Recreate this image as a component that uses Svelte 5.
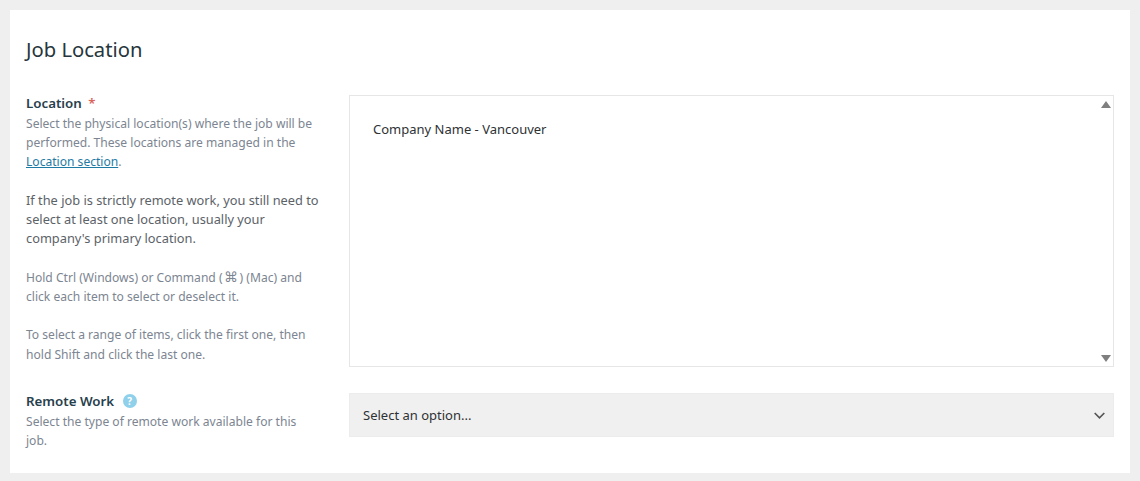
<script lang="ts">
  const locations = ['Company Name - Vancouver'];
</script>

<div class="page">
  <section class="card">
    <h2>Job Location</h2>

    <div class="field location">
      <div class="info">
        <div class="label">Location <span class="req">*</span></div>
        <p class="muted">
          Select the physical location(s) where the job will be performed. These locations are managed in the
          <a href="#location">Location section</a>.
        </p>
        <p class="dark">
          If the job is strictly remote work, you still need to select at least one location, usually your company's primary location.
        </p>
        <p class="muted">Hold Ctrl (Windows) or Command (<span class="cmd">⌘</span>) (Mac) and click each item to select or deselect it.</p>
        <p class="muted">To select a range of items, click the first one, then hold Shift and click the last one.</p>
      </div>
      <div class="listbox">
        <div class="options">
          {#each locations as loc}
            <div class="option">{loc}</div>
          {/each}
        </div>
        <div class="scrollbar">
          <span class="arrow up"></span>
          <span class="arrow down"></span>
        </div>
      </div>
    </div>

    <div class="field remote">
      <div class="info">
        <div class="label">
          Remote Work
          <span class="help">?</span>
        </div>
        <p class="muted">Select the type of remote work available for this job.</p>
      </div>
      <div class="select">
        <span>Select an option...</span>
        <svg viewBox="0 0 11 7" width="11" height="7" fill="none" stroke="#555" stroke-width="1.7" aria-hidden="true">
          <path d="M.7 1 5.5 5.8 10.3 1"></path>
        </svg>
      </div>
    </div>
  </section>
</div>

<style>
  :global(body) {
    margin: 0;
    background: #efefef;
    font-family: "Noto Sans", "Open Sans", sans-serif;
  }

  .page {
    padding: 10px;
    height: 481px;
    box-sizing: border-box;
  }

  .card {
    background: #fff;
    height: 463px;
    padding: 24px 16px 0;
    box-sizing: border-box;
  }

  h2 {
    margin: 0 0 29px;
    font-size: 20.2px;
    font-weight: 400;
    line-height: 30px;
    color: #27363c;
  }

  .field {
    display: grid;
    grid-template-columns: 323px 1fr;
  }

  .location {
    height: 274px;
    margin-bottom: 24px;
  }

  .label {
    font-size: 13.3px;
    font-weight: 600;
    line-height: 20px;
    margin-bottom: 1px;
    color: #27404c;
  }

  .req {
    color: #d9655a;
    margin-left: 3px;
  }

  p {
    margin: 0 0 19.25px;
    font-size: 12.08px;
    line-height: 19.2px;
    width: 295px;
  }

  p:last-child {
    margin-bottom: 0;
  }

  .muted {
    width: 290px;
    color: #7c8591;
  }

  .dark {
    font-size: 12.8px;
    color: #5c6268;
  }

  .cmd {
    font-family: "DejaVu Sans", sans-serif;
    font-size: 14px;
    line-height: 1;
    margin: 0 1.5px;
  }

  a {
    color: #1f7aa3;
  }

  .listbox {
    margin-top: 2px;
    display: flex;
    border: 1px solid #e6e6e6;
    box-sizing: border-box;
  }

  .options {
    flex: 1;
    padding: 24px 23px;
  }

  .option {
    font-size: 13px;
    line-height: 19px;
    color: #2e3235;
  }

  .scrollbar {
    width: 15px;
    display: flex;
    flex-direction: column;
    justify-content: space-between;
    align-items: center;
    padding: 5px 0 4px;
  }

  .arrow {
    width: 0;
    height: 0;
    border-left: 5px solid transparent;
    border-right: 5px solid transparent;
  }

  .up {
    border-bottom: 7px solid #7f7f7f;
  }

  .down {
    border-top: 7px solid #7f7f7f;
  }

  .remote {
    align-items: start;
  }

  .help {
    display: inline-flex;
    align-items: center;
    justify-content: center;
    width: 14px;
    height: 14px;
    border-radius: 50%;
    background: #8fd0ea;
    color: #fff;
    font-size: 10px;
    font-weight: 700;
    margin-left: 5px;
    vertical-align: 1px;
  }

  .select {
    margin-top: 2px;
    height: 44px;
    background: #f0f0f0;
    border: 1px solid #ececec;
    box-sizing: border-box;
    display: flex;
    align-items: center;
    justify-content: space-between;
    padding: 0 8px 0 13px;
    font-size: 13px;
    color: #2e3235;
  }
</style>
